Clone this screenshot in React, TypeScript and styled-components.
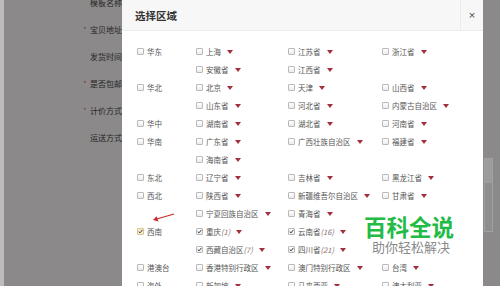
import React from 'react';
import styled, { createGlobalStyle } from 'styled-components';

const Global = createGlobalStyle`
  html, body { margin: 0; padding: 0; }
  body {
    width: 500px;
    height: 286px;
    overflow: hidden;
    background: #8b898a;
    font-family: "Noto Sans CJK SC", "Noto Sans", sans-serif;
  }
`;

const Page = styled.div`
  position: relative;
  display: flex;
  width: 500px;
  height: 286px;
  overflow: hidden;
  background: #8b898a;
`;

const LeftPane = styled.div`
  flex: none;
  width: 122px;
  box-sizing: border-box;
  border-left: 4px solid #bdbcbd;
  padding-left: 86px;
  overflow: hidden;
`;

const LabelList = styled.div`
  display: flex;
  flex-direction: column;
  margin-top: -11px;
`;

const FormLabel = styled.div`
  height: 27px;
  line-height: 27px;
  font-size: 8px;
  color: #262626;
  white-space: nowrap;
`;

const Required = styled.span`
  display: inline-block;
  width: 7px;
  margin-left: -7px;
  color: #7a4545;
`;

const Modal = styled.div`
  flex: none;
  width: 361px;
  display: flex;
  flex-direction: column;
  background: #fff;
`;

const Header = styled.div`
  height: 30px;
  display: flex;
  align-items: center;
  background: #f7f7f7;
  border-bottom: 1px solid #ececec;
  padding-left: 13px;
`;

const Title = styled.div`
  flex: 1;
  font-size: 10.5px;
  font-weight: bold;
  color: #333;
`;

const Close = styled.div`
  width: 22px;
  height: 30px;
  display: flex;
  align-items: center;
  justify-content: center;
  border-left: 1px solid #ebebeb;
  font-size: 9px;
  color: #444;
  font-family: "DejaVu Sans", sans-serif;
`;

const Body = styled.div`
  display: flex;
  flex-direction: column;
  padding: 11px 0 0 15px;
`;

const Group = styled.div`
  display: flex;
`;

const RegionCell = styled.div`
  flex: none;
  width: 59px;
  height: 18px;
  display: flex;
  align-items: center;
  font-size: 7.5px;
  color: #555;
`;

const ItemGrid = styled.div`
  flex: 1;
  display: grid;
  grid-template-columns: 92px 94px 1fr;
  grid-auto-rows: 18px;
`;

const Item = styled.div`
  display: flex;
  align-items: center;
  font-size: 7.5px;
  color: #555;
  white-space: nowrap;
`;

const Box = styled.span<{ $focus?: boolean }>`
  flex: none;
  box-sizing: border-box;
  width: 7px;
  height: 7px;
  margin-right: 3px;
  border: 1px solid ${(p) => (p.$focus ? '#d9c48f' : '#b9b9b9')};
  border-radius: 1px;
  background: ${(p) => (p.$focus ? '#f6ecd2' : 'linear-gradient(#fff, #ececec)')};
  display: flex;
  align-items: center;
  justify-content: center;
  overflow: visible;
`;

const Count = styled.span`
  font-style: italic;
  color: #8a7070;
`;

const Caret = styled.span`
  flex: none;
  width: 0;
  height: 0;
  margin-left: 6px;
  margin-top: 1px;
  border-left: 3.5px solid transparent;
  border-right: 3.5px solid transparent;
  border-top: 4px solid #a3303c;
`;

const RightPane = styled.div`
  flex: 1;
  padding: 158px 0 0 1px;
`;

const ScrollBox = styled.div`
  width: 9px;
  height: 74px;
  box-sizing: border-box;
  border: 1px solid #a2a1a2;
  background: linear-gradient(#9d9c9d 0 24px, #8f8e8f 24px);
`;

const ArrowMark = styled.svg`
  position: absolute;
  left: 148px;
  top: 208px;
`;

const Watermark = styled.div`
  position: absolute;
  left: 364px;
  top: 214px;
  display: flex;
  flex-direction: column;
  pointer-events: none;
`;

const WmTitle = styled.div`
  font-size: 22.5px;
  line-height: 24px;
  font-weight: bold;
  color: #22bb44;
  letter-spacing: 0;
`;

const WmSub = styled.div`
  margin-top: 2px;
  margin-left: 8px;
  font-size: 13px;
  line-height: 14px;
  color: #8a8a8a;
`;

type Entry = { label: string; count?: number; checked?: boolean } | null;
type Region = { name: string; checked?: boolean; items: Entry[] };

const regions: Region[] = [
  { name: '华东', items: [{ label: '上海' }, { label: '江苏省' }, { label: '浙江省' }, { label: '安徽省' }, { label: '江西省' }] },
  { name: '华北', items: [{ label: '北京' }, { label: '天津' }, { label: '山西省' }, { label: '山东省' }, { label: '河北省' }, { label: '内蒙古自治区' }] },
  { name: '华中', items: [{ label: '湖南省' }, { label: '湖北省' }, { label: '河南省' }] },
  { name: '华南', items: [{ label: '广东省' }, { label: '广西壮族自治区' }, { label: '福建省' }, { label: '海南省' }] },
  { name: '东北', items: [{ label: '辽宁省' }, { label: '吉林省' }, { label: '黑龙江省' }] },
  { name: '西北', items: [{ label: '陕西省' }, { label: '新疆维吾尔自治区' }, { label: '甘肃省' }, { label: '宁夏回族自治区' }, { label: '青海省' }] },
  {
    name: '西南',
    checked: true,
    items: [
      { label: '重庆', count: 1, checked: true },
      { label: '云南省', count: 16, checked: true },
      null,
      { label: '西藏自治区', count: 7, checked: true },
      { label: '四川省', count: 21, checked: true },
    ],
  },
  { name: '港澳台', items: [{ label: '香港特别行政区' }, { label: '澳门特别行政区' }, { label: '台湾' }] },
  { name: '海外', items: [{ label: '新加坡' }, { label: '马来西亚' }, { label: '澳大利亚' }] },
];

const Check = () => (
  <svg width="7" height="7" viewBox="0 0 7 7">
    <path d="M1 3.6 L2.8 5.4 L6.2 1.2" fill="none" stroke="#2a2a2a" strokeWidth="1.3" />
  </svg>
);

const CheckBox = ({ checked, focus }: { checked?: boolean; focus?: boolean }) => (
  <Box $focus={focus}>{checked ? <Check /> : null}</Box>
);

const formLabels: { text: string; req?: boolean }[] = [
  { text: '模板名称' },
  { text: '宝贝地址', req: true },
  { text: '发货时间' },
  { text: '是否包邮', req: true },
  { text: '计价方式', req: true },
  { text: '运送方式' },
];

export default function App() {
  return (
    <>
      <Global />
      <Page>
        <LeftPane>
          <LabelList>
            {formLabels.map((l) => (
              <FormLabel key={l.text}>
                {l.req ? <Required>*</Required> : null}
                {l.text}
              </FormLabel>
            ))}
          </LabelList>
        </LeftPane>
        <Modal>
          <Header>
            <Title>选择区域</Title>
            <Close>×</Close>
          </Header>
          <Body>
            {regions.map((r) => (
              <Group key={r.name}>
                <RegionCell>
                  <CheckBox checked={r.checked} focus={r.checked} />
                  {r.name}
                </RegionCell>
                <ItemGrid>
                  {r.items.map((it, i) =>
                    it ? (
                      <Item key={it.label}>
                        <CheckBox checked={it.checked} />
                        {it.label}
                        {it.count !== undefined ? <Count>({it.count})</Count> : null}
                        <Caret />
                      </Item>
                    ) : (
                      <Item key={'empty' + i} />
                    )
                  )}
                </ItemGrid>
              </Group>
            ))}
          </Body>
        </Modal>
        <RightPane>
          <ScrollBox />
        </RightPane>
        <ArrowMark width="30" height="16" viewBox="0 0 30 16">
          <line x1="26" y1="6" x2="7" y2="11.5" stroke="#cc2a2a" strokeWidth="1.3" />
          <polygon points="5,12 10.5,13.4 8.6,8.2" fill="#cc2a2a" />
        </ArrowMark>
        <Watermark>
          <WmTitle>百科全说</WmTitle>
          <WmSub>助你轻松解决</WmSub>
        </Watermark>
      </Page>
    </>
  );
}
